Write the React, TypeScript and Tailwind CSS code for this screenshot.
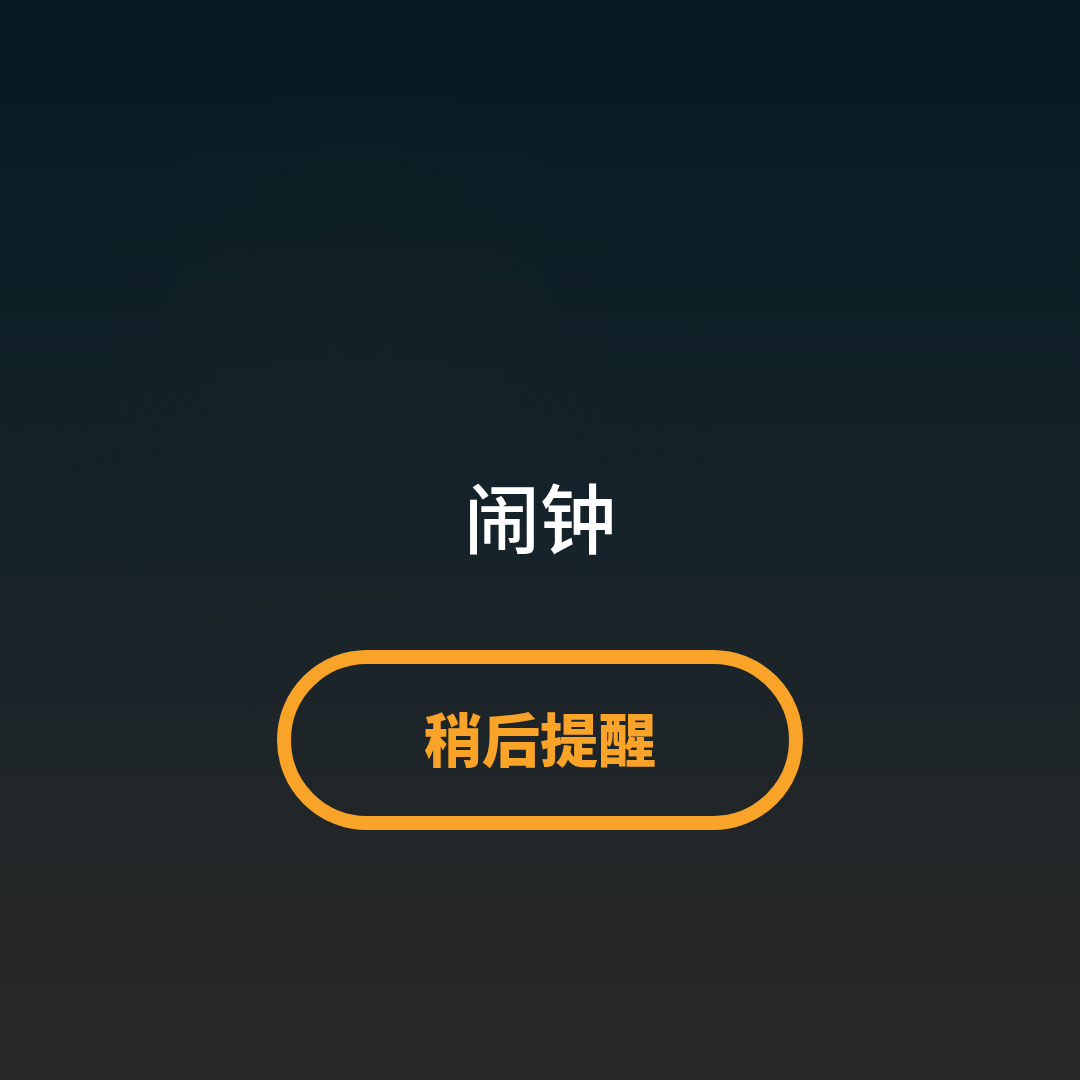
export default function App() {
  return (
    <div
      className="relative w-[1080px] h-[1080px] overflow-hidden bg-gradient-to-b from-[#051a22] via-[#16232a] to-[#2a2826]"
      style={{ fontFamily: '"Noto Sans CJK SC", "Noto Sans", sans-serif' }}
    >
      {/* soft glow behind the blurred wallpaper */}
      <div className="absolute left-[180px] top-[230px] w-[360px] h-[220px] rounded-full bg-[#262b28] opacity-30 blur-[120px]" />

      <div className="relative flex flex-col items-center pt-[477px]">
        <h1 className="text-[76px] leading-none font-medium text-white">闹钟</h1>

        <button className="mt-[97px] w-[526px] h-[180px] rounded-full border-[14px] border-[#f9a428] flex items-center justify-center">
          <span className="text-[58px] leading-none font-black text-[#f9a428] pb-[6px]">稍后提醒</span>
        </button>
      </div>
    </div>
  )
}
